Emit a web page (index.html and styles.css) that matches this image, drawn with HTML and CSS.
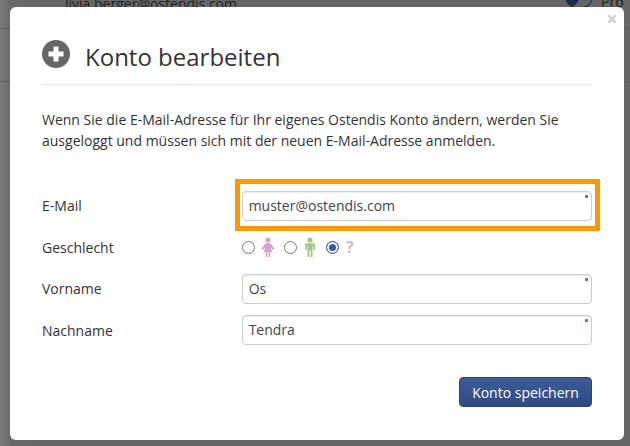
FILE: index.html
```html
<!DOCTYPE html>
<html lang="de">
<head>
<meta charset="utf-8">
<title>Konto bearbeiten</title>
<link rel="stylesheet" href="styles.css">
</head>
<body>
<div class="backdrop">
  <div class="topbar">
    <span class="user">livia.berger@ostendis.com</span>
    <span class="toggle"></span>
    <span class="pro">Pro</span>
  </div>
  <div class="band"></div>
</div>
<div class="modal">
  <svg class="close" viewBox="0 0 10 10" aria-label="Schliessen"><path d="M2.2 0.6 5 3.3 7.8 0.6 9.5 2.2 6.7 5 9.5 7.8 7.8 9.4 5 6.7 2.2 9.4 0.5 7.8 3.3 5 0.5 2.2Z"/></svg>
  <header class="head">
    <svg class="plus" viewBox="0 0 28 28"><circle cx="14" cy="14" r="14"/><path d="M11.5 6.5h5v5h5v5h-5v5h-5v-5h-5v-5h5z"/></svg>
    <h1>Konto bearbeiten</h1>
  </header>
  <p class="intro">Wenn Sie die E-Mail-Adresse für Ihr eigenes Ostendis Konto ändern, werden Sie ausgeloggt und müssen sich mit der neuen E-Mail-Adresse anmelden.</p>
  <form class="form">
    <div class="row">
      <label>E-Mail</label>
      <div class="field highlighted"><span class="input">muster@ostendis.com<i class="req"></i></span></div>
    </div>
    <div class="row gender">
      <label>Geschlecht</label>
      <div class="radios">
        <span class="radio"></span>
        <svg class="person" viewBox="0 0 14 20"><circle cx="7" cy="3" r="2.6" fill="#d6a0d0"/><path fill="#d6a0d0" d="M4.5 6.2h5l4 5.6-1.5 1-2.2-2.4 1.4 4.6H9.2V20H7.6v-5H6.4v5H4.8v-5.0H2.8l1.4-4.6L2 12.8l-1.5-1z"/></svg>
        <span class="radio"></span>
        <svg class="person" viewBox="0 0 14 20"><circle cx="7" cy="3" r="2.6" fill="#a4c488"/><path fill="#a4c488" d="M3.6 6.2h6.8c.9 0 1.4.6 1.4 1.4V13h-1.7V8.6h-.6V20H7.6v-6.4H6.4V20H4.5V8.6h-.6V13H2.2V7.6c0-.8.5-1.4 1.4-1.4z"/></svg>
        <span class="radio checked"></span>
        <span class="unknown">?</span>
      </div>
    </div>
    <div class="row">
      <label>Vorname</label>
      <div class="field"><span class="input">Os<i class="req"></i></span></div>
    </div>
    <div class="row">
      <label>Nachname</label>
      <div class="field"><span class="input">Tendra<i class="req"></i></span></div>
    </div>
    <div class="actions"><button type="button" class="save">Konto speichern</button></div>
  </form>
</div>
</body>
</html>
```
FILE: styles.css
```css
* { box-sizing: border-box; }
html, body { margin: 0; height: 100%; }
body {
  width: 630px;
  height: 446px;
  overflow: hidden;
  position: relative;
  background: #666;
  font-family: "Open Sans", sans-serif;
  font-size: 14px;
  color: #333;
}
.backdrop { height: 446px; background: linear-gradient(90deg, #7a7a7a 0, #6a6a6a 10px, #666 40px); }
.topbar {
  height: 29px;
  border-bottom: 1px solid #5c5c5c;
  display: flex;
  align-items: flex-start;
  color: #1f1f1f;
  position: relative;
}
.user { margin: -5px 0 0 65px; font-size: 14px; line-height: 18px; }
.toggle { position: absolute; left: 565px; top: -14px; width: 28px; height: 22px; border-radius: 14px; background: #1d2c50; border: 1px solid #1d2c50; box-shadow: inset -13px 0 0 #666; }
.pro { position: absolute; left: 601px; top: -7px; line-height: 18px; }
.band { height: 53px; border-bottom: 1px solid #5c5c5c; }
.modal {
  position: absolute;
  left: 10px;
  top: 7px;
  width: 614px;
  height: 433px;
  background: #fff;
  border-radius: 6px;
  padding: 30px 32px 0;
}
.close { position: absolute; right: 7px; top: 7px; width: 10px; height: 10px; fill: #cfcfcf; }
.head {
  display: flex;
  align-items: center;
  gap: 15px;
  height: 48px;
  border-bottom: 1px solid #e4e4e4;
  padding-bottom: 8px;
}
.plus { width: 28px; height: 28px; fill: #666; margin-top: -6px; }
.plus path { fill: #fff; }
h1 { margin: 0; font-size: 24px; font-weight: 400; line-height: 32px; color: #333; }
.intro { margin: 24px 0 0; line-height: 21px; color: #333; width: 530px; }
.form { margin-top: 34px; }
.row { display: flex; align-items: center; height: 41.5px; }
.row label { width: 200px; }
.field { width: 351px; }
.field.highlighted { position: relative; }
.field.highlighted::after {
  content: "";
  position: absolute;
  left: -7px;
  right: -8px;
  top: -12px;
  bottom: -10px;
  border: 5px solid #ff9800;
  pointer-events: none;
}
.input {
  display: block;
  position: relative;
  height: 30px;
  line-height: 28px;
  padding: 0 6px;
  border: 1px solid #ccc;
  border-radius: 4px;
  box-shadow: inset 0 1px 1px rgba(0,0,0,.08);
  color: #444;
}
.req { position: absolute; top: 3px; right: 3px; width: 3px; height: 3px; background: #e2452a; border-radius: 1px; }
.radios { display: flex; align-items: center; }
.radio { width: 13px; height: 13px; border-radius: 50%; border: 1px solid #767676; background: #fff; }
.radio.checked { border-color: #3a5a9c; background: #3a5a9c; box-shadow: inset 0 0 0 2px #fff; }
.person { width: 14px; height: 20px; margin: 0 9px 0 6px; }
.unknown { font-weight: 700; font-size: 16px; line-height: 20px; color: #c4c4c4; margin-left: 7px; }
.actions { display: flex; justify-content: flex-end; margin-top: 26px; width: 550px; }
.save {
  width: 133px;
  height: 30px;
  border: 1px solid #2a4275;
  border-radius: 4px;
  background: linear-gradient(#3d5c99, #2d4a80);
  color: #fff;
  font: 14px "Open Sans", sans-serif;
  padding: 0;
}
```
